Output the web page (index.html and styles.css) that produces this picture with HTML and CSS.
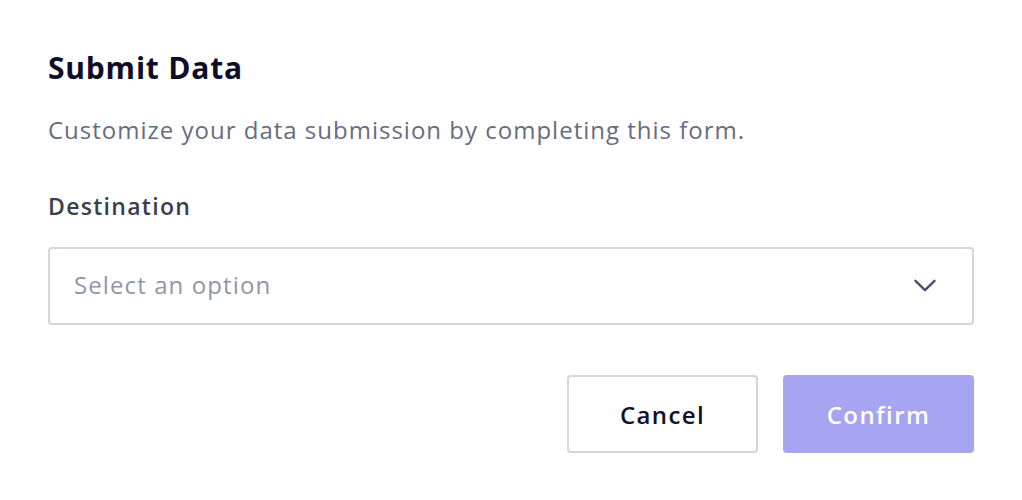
FILE: index.html
```html
<!DOCTYPE html>
<html>
<head>
<meta charset="utf-8">
<link rel="stylesheet" href="styles.css">
</head>
<body>
<div class="dialog">
  <h1 class="title">Submit Data</h1>
  <p class="desc">Customize your data submission by completing this form.</p>
  <label class="label">Destination</label>
  <div class="select">
    <span class="placeholder">Select an option</span>
    <svg class="chev" width="22" height="14" viewBox="0 0 22 14"><path d="M1.5 1.8 L11 11.2 L20.5 1.8" fill="none" stroke="#4b5068" stroke-width="2.4" stroke-linecap="round" stroke-linejoin="round"/></svg>
  </div>
  <div class="actions">
    <button class="btn cancel">Cancel</button>
    <button class="btn confirm">Confirm</button>
  </div>
</div>
</body>
</html>
```
FILE: styles.css
```css
html, body { margin: 0; padding: 0; background: #fff; }
body { font-family: "Open Sans", Lato, sans-serif; width: 1022px; height: 500px; }
.dialog { padding: 50px 48px 0 48px; display: flex; flex-direction: column; }
.title { margin: 0; font-size: 30px; font-weight: 700; color: #0e0e2a; line-height: 36px; letter-spacing: 0.8px; }
.desc { margin: 29px 0 0 0; font-size: 24px; color: #676c80; line-height: 30px; letter-spacing: 1px; }
.label { margin-top: 46px; font-size: 23px; font-weight: 600; color: #3d3e4b; line-height: 30px; letter-spacing: 1.3px; }
.select { margin-top: 26px; height: 78px; box-sizing: border-box; border: 2px solid #d3d6df; border-radius: 4px; display: flex; align-items: center; justify-content: space-between; padding: 0 36px 0 24px; }
.placeholder { font-size: 24px; color: #9096a8; letter-spacing: 1.1px; margin-bottom: 4px; }
.chev { display: block; }
.actions { margin-top: 50px; display: flex; justify-content: flex-end; gap: 25px; }
.btn { width: 191px; height: 78px; border-radius: 4px; font-family: inherit; font-size: 24px; font-weight: 600; letter-spacing: 1.4px; cursor: pointer; padding: 0; }
.cancel { background: #fff; border: 2px solid #d3d6df; color: #10102c; }
.confirm { background: #a7a4f1; border: none; color: #fff; }
```
